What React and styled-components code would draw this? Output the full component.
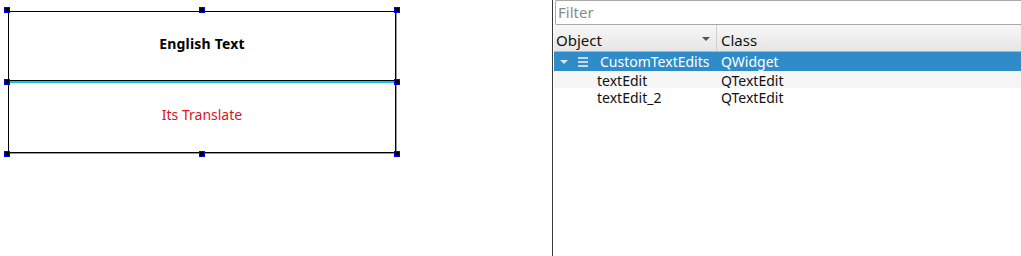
import React from 'react';
import styled, { createGlobalStyle, css } from 'styled-components';

const GlobalStyle = createGlobalStyle`
    html, body {
        margin: 0;
        padding: 0;
        background: #ffffff;
    }
    body {
        font-family: 'Noto Sans', 'DejaVu Sans', sans-serif;
        color: #101010;
    }
`;

const Screen = styled.div`
    display: flex;
    width: 1021px;
    height: 256px;
    overflow: hidden;
    background: #ffffff;
`;

/* form editor canvas */
const Canvas = styled.div`
    width: 552px;
    flex: none;
    padding: 11px 0 0 8px;
    box-sizing: border-box;
`;

const Form = styled.div`
    position: relative;
    width: 388px;
    height: 142px;
    display: flex;
    flex-direction: column;
    box-shadow: 1px 1px 0 #9a9a9a;
`;

const Editor = styled.div(
    ({ top }) => css`
        height: 70px;
        box-sizing: border-box;
        display: flex;
        align-items: center;
        justify-content: center;
        border: 1px solid #000;
        ${top
            ? css`
                  padding-bottom: 5px;
              `
            : css`
                  height: 72px;
                  border-top: 2px solid #12c2ee;
                  padding-bottom: 7px;
              `};
    `
);

const EnglishText = styled.span`
    font-size: 14px;
    font-weight: 700;
    color: #000;
    letter-spacing: 0.2px;
`;

const TranslateText = styled.span`
    font-size: 14px;
    color: #d8141e;
`;

const Handle = styled.span`
    position: absolute;
    width: 6px;
    height: 6px;
    box-sizing: border-box;
    border: 1px solid #0000ff;
    background: #000;
`;

const handles = [
    ['-4px', '-4px'],
    ['191px', '-4px'],
    ['386px', '-4px'],
    ['-4px', '68px'],
    ['386px', '68px'],
    ['-4px', '140px'],
    ['191px', '140px'],
    ['386px', '140px']
];

/* object inspector */
const Divider = styled.div`
    width: 1px;
    flex: none;
    background: #3a3a3a;
`;

const Inspector = styled.div`
    flex: 1;
    display: flex;
    flex-direction: column;
    padding-left: 1px;
    background: #fff;
    font-size: 14px;
`;

const FilterInput = styled.div`
    height: 25px;
    margin-left: 1px;
    box-sizing: border-box;
    border: 1px solid #a8a8a8;
    border-right: none;
    border-radius: 2px 0 0 2px;
    padding: 0 0 1px 2px;
    display: flex;
    align-items: center;
    color: #8a8a8a;
    font-size: 15px;
    background: #fff;
`;

const Header = styled.div`
    height: 27px;
    box-sizing: border-box;
    display: grid;
    grid-template-columns: 163px 1fr;
    background: linear-gradient(#f7f7f7, #e6e6e6);
    border-bottom: 1px solid #b4b4b4;
`;

const HeaderCell = styled.div(
    ({ last }) => css`
        display: flex;
        align-items: center;
        justify-content: space-between;
        padding: 3px 6px 0 2px;
        box-sizing: border-box;
        color: #111;
        font-size: 15px;
        ${!last &&
            css`
                border-right: 1px solid #cfcfcf;
            `};
        ${last &&
            css`
                padding-left: 4px;
            `};
    `
);

const SortArrow = styled.span`
    width: 0;
    height: 0;
    border-left: 4px solid transparent;
    border-right: 4px solid transparent;
    border-top: 4px solid #555;
    margin-top: -2px;
`;

const Row = styled.div(
    ({ selected, alt }) => css`
        height: ${selected ? 19 : 17}px;
        display: grid;
        grid-template-columns: 167px 1fr;
        align-items: center;
        color: #111;
        background: ${alt ? '#f6f6f6' : '#fff'};
        ${selected &&
            css`
                background: #2f8cc8;
                color: #fff;
            `};
    `
);

const NameCell = styled.div(
    ({ indent }) => css`
        display: flex;
        align-items: center;
        padding-left: ${indent}px;
        white-space: nowrap;
    `
);

const Expander = styled.span`
    width: 0;
    height: 0;
    border-left: 4px solid transparent;
    border-right: 4px solid transparent;
    border-top: 4px solid #d6e6f2;
    margin-right: 10px;
`;

const WidgetIcon = styled.svg`
    width: 10px;
    height: 12px;
    margin-right: 12px;
`;

const ClassCell = styled.div`
    white-space: nowrap;
`;

const rows = [
    { name: 'textEdit', cls: 'QTextEdit', alt: true },
    { name: 'textEdit_2', cls: 'QTextEdit', alt: false }
];

export default function App() {
    return (
        <Screen>
            <GlobalStyle />
            <Canvas>
                <Form>
                    <Editor top>
                        <EnglishText>English Text</EnglishText>
                    </Editor>
                    <Editor>
                        <TranslateText>Its Translate</TranslateText>
                    </Editor>
                    {handles.map(([left, top], i) => (
                        <Handle key={i} style={{ left, top }} />
                    ))}
                </Form>
            </Canvas>
            <Divider />
            <Inspector>
                <FilterInput>Filter</FilterInput>
                <Header>
                    <HeaderCell>
                        Object
                        <SortArrow />
                    </HeaderCell>
                    <HeaderCell last>Class</HeaderCell>
                </Header>
                <Row selected>
                    <NameCell indent={6}>
                        <Expander />
                        <WidgetIcon viewBox="0 0 10 12">
                            <rect x="0" y="1" width="10" height="2" fill="#c9dbe9" />
                            <rect x="0" y="5" width="10" height="2" fill="#c9dbe9" />
                            <rect x="0" y="9" width="10" height="2" fill="#c9dbe9" />
                        </WidgetIcon>
                        CustomTextEdits
                    </NameCell>
                    <ClassCell>QWidget</ClassCell>
                </Row>
                {rows.map(r => (
                    <Row key={r.name} alt={r.alt}>
                        <NameCell indent={43}>{r.name}</NameCell>
                        <ClassCell>{r.cls}</ClassCell>
                    </Row>
                ))}
            </Inspector>
        </Screen>
    );
}
